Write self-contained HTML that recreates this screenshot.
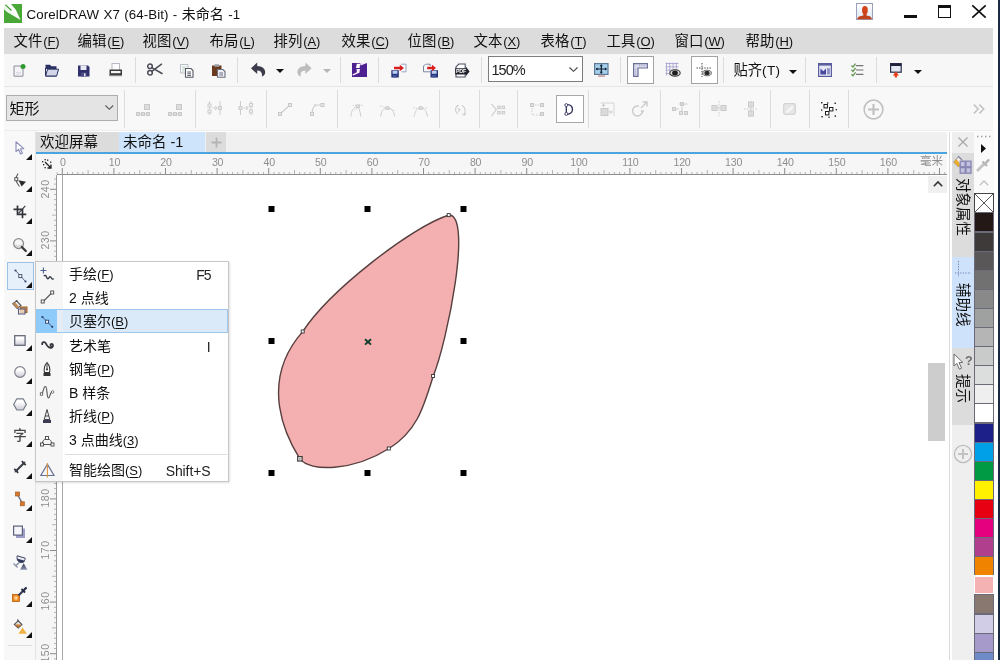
<!DOCTYPE html>
<html lang="zh">
<head>
<meta charset="utf-8">
<title>CorelDRAW X7 (64-Bit) - 未命名 -1</title>
<style>
*{box-sizing:border-box;margin:0;padding:0}
html,body{width:1000px;height:660px;overflow:hidden;background:#fff}
body{font-family:"Liberation Sans","Noto Sans CJK SC",sans-serif;color:#1a1a1a;position:relative;will-change:transform}
.abs,.abs>*{position:absolute}
svg{overflow:visible;display:block}
#title{left:0;top:0;width:1000px;height:28px;background:#fff}
#title .txt{left:26.5px;top:5px;font-size:13.3px;word-spacing:0.5px;letter-spacing:0.09px;line-height:18px;white-space:nowrap;color:#111}
#menubar{left:4px;top:28px;width:989px;height:26px;background:#dcdcdc}
#menubar span{margin-left:-0.5px;top:3px;font-size:14.4px;line-height:20px;white-space:nowrap;color:#111}
#menubar span i{font-style:normal;font-size:13px;letter-spacing:-0.1px;margin-left:.9px}
u{text-decoration:underline;text-underline-offset:2px;text-decoration-thickness:1px}
#tb1{left:4px;top:54px;width:989px;height:33px;background:#f7f7f7;border-bottom:1px solid #e6e6e6}
#tb2{left:4px;top:87px;width:989px;height:44px;background:#f8f8f8;border-bottom:1px solid #ededed}
.sep{width:1px;background:#dcdcdc}
.tri{width:0;height:0;border-left:4px solid transparent;border-right:4px solid transparent;border-top:4.5px solid #111}
.tri.g{border-top-color:#b5b5b5}
.box{background:#fff;border:1px solid #a3a3a3}
#prop svg{opacity:.86}
#prop svg.on{opacity:1}
#toolbox{left:4px;top:131px;width:32px;height:529px;background:#f8f8f8;border-right:1px solid #e4e4e4}
.ct{width:0;height:0;border-left:6.5px solid transparent;border-bottom:6.5px solid #111}
#tabs{left:36px;top:132px;width:911px;height:21px;background:#f0f0f0}
#tabs div{top:0;height:21px;font-size:14.5px;line-height:20px;white-space:nowrap;color:#111}
#hruler{left:36px;top:154px;width:911px;height:21px;background:#f6f6f6}
#vruler{left:36px;top:175px;width:21px;height:485px;background:#f6f6f6}
.rl{font-size:10.6px;line-height:11px;color:#8e8e8e;white-space:nowrap;letter-spacing:-0.2px}
#canvas{left:57px;top:175px;width:890px;height:485px;background:#fff}
#fly{left:35px;top:261px;width:194px;height:221px;background:#fff;border:1px solid #c6c6c6;box-shadow:1px 1px 2px rgba(0,0,0,.12)}
#fly .ic{left:0;top:0;width:27px;height:219px;background:#f6f6f6}
#fly .t{left:33px;font-size:14px;line-height:20px;white-space:nowrap;color:#111}
#fly .t i{font-style:normal;font-size:13px}
#fly .k{font-size:14px;line-height:20px;white-space:nowrap;color:#222;letter-spacing:-0.1px;margin-top:1.2px}
#dock{left:952px;top:132px;width:22px;height:528px;background:#efefef}
.vt{writing-mode:vertical-rl;text-orientation:sideways;font-size:14.5px;line-height:22px;width:22px;text-align:left;color:#111;white-space:nowrap;left:0}
#pal{left:974px;top:132px;width:20px;height:528px;background:#fafafa}
.sw{left:0;width:20px;height:20px;border:1px solid #6a6a78}
</style>
</head>
<body>
<!-- TITLE BAR -->
<div id="title" class="abs">
  <svg style="left:4px;top:4px" width="18" height="19" viewBox="0 0 18 19"><rect width="18" height="19" fill="#4aa838"/><path d="M0 0 H7 L12 6 L16.5 16 L9 11.5 L3 8 L0 5 Z" fill="#fff"/><path d="M0 5 L0 0 L3 0 L9 11.5 Z" fill="#eaf6e6"/><path d="M1.5 0.8 L7.5 6.5" stroke="#3f9a30" stroke-width="1.1" fill="none"/></svg>
  <div class="txt">CorelDRAW X7 (64-Bit) - <span style="position:static;font-size:14px">未命名</span> -1</div>
  <svg style="left:856px;top:3px" width="17" height="17" viewBox="0 0 17 17"><defs><linearGradient id="ug" x1="0" y1="0" x2="0" y2="1"><stop offset="0" stop-color="#ffffff"/><stop offset="1" stop-color="#dbe6f4"/></linearGradient></defs><rect x="0.5" y="0.5" width="16" height="16" fill="url(#ug)" stroke="#9aa0b8"/><ellipse cx="8.9" cy="7.3" rx="2.9" ry="4.2" fill="#d3441a"/><rect x="7.3" y="9.5" width="3.2" height="4" fill="#c9431b"/><path d="M1.2 16.2 C1.2 13.6 4.5 12.9 7 12.4 H10.8 C13.3 12.9 15.8 13.6 15.8 16.2 Z" fill="#c2421b"/></svg>
  <div style="left:904px;top:15px;width:13px;height:3px;background:#111"></div>
  <div style="left:938px;top:5px;width:13px;height:13px;border:1.3px solid #111;border-top-width:3px"></div>
  <svg style="left:971px;top:4px" width="16" height="15" viewBox="0 0 16 15"><path d="M1.3 1.3 L14.7 13.7 M14.7 1.3 L1.3 13.7" stroke="#111" stroke-width="1.7" fill="none"/></svg>
  <div style="left:998px;top:0;width:2px;height:660px;background:#1a2a42"></div>
</div>
<!-- MENU BAR -->
<div id="menubar" class="abs">
  <span style="left:10px">文件<i>(<u>F</u>)</i></span>
  <span style="left:74px">编辑<i>(<u>E</u>)</i></span>
  <span style="left:139px">视图<i>(<u>V</u>)</i></span>
  <span style="left:206px">布局<i>(<u>L</u>)</i></span>
  <span style="left:270px">排列<i>(<u>A</u>)</i></span>
  <span style="left:338px">效果<i>(<u>C</u>)</i></span>
  <span style="left:404px">位图<i>(<u>B</u>)</i></span>
  <span style="left:470px">文本<i>(<u>X</u>)</i></span>
  <span style="left:537px">表格<i>(<u>T</u>)</i></span>
  <span style="left:603px">工具<i>(<u>O</u>)</i></span>
  <span style="left:671px">窗口<i>(<u>W</u>)</i></span>
  <span style="left:742px">帮助<i>(<u>H</u>)</i></span>
</div>
<!-- TOOLBARS BACKGROUND -->
<div id="tb1" class="abs"></div>
<div id="tb2" class="abs"></div>
<!-- STANDARD TOOLBAR ICONS -->
<div class="abs" id="std" style="left:0;top:0">
  <div class="sep" style="left:135px;top:57px;height:26px"></div>
  <div class="sep" style="left:237px;top:57px;height:26px"></div>
  <div class="sep" style="left:340px;top:57px;height:26px"></div>
  <div class="sep" style="left:378px;top:57px;height:26px"></div>
  <div class="sep" style="left:481px;top:57px;height:26px"></div>
  <div class="sep" style="left:620px;top:57px;height:26px"></div>
  <div class="sep" style="left:723px;top:57px;height:26px"></div>
  <div class="sep" style="left:805px;top:57px;height:26px"></div>
  <div class="sep" style="left:876px;top:57px;height:26px"></div>
  <!-- new -->
  <svg style="left:13px;top:63px" width="13" height="14" viewBox="0 0 13 14"><path d="M1 3 H7.5 L10 5.5 V13.2 H1 Z" fill="#f3f3f7" stroke="#8d8d9c" stroke-width="1"/><path d="M3 9.5 H8 M3 11 H8" stroke="#d5d5df" stroke-width=".8"/><circle cx="10" cy="3.6" r="2.5" fill="#2f9b2f"/></svg>
  <!-- open -->
  <svg style="left:45px;top:64px" width="14" height="13" viewBox="0 0 14 13"><path d="M0.5 0.8 H5 L6.5 2.3 H11.5 V5 H0.5 Z" fill="#2b3163"/><path d="M0.5 4 V12 H11.5" fill="none" stroke="#2b3163" stroke-width="1"/><path d="M0.6 12 L2.6 5.2 H13.6 L11.6 12 Z" fill="#d3d6e6" stroke="#2b3163" stroke-width="1"/></svg>
  <!-- save -->
  <svg style="left:78px;top:65px" width="12" height="12" viewBox="0 0 12 12"><path d="M0 0.5 H10 L11.5 2 V11.5 H0 Z" fill="#2e2f6c"/><rect x="2.5" y="0.5" width="6" height="4.5" fill="#e9e9f4"/><rect x="3" y="7.5" width="5.5" height="4" fill="#4a4b86"/><rect x="6" y="8.3" width="1.5" height="3" fill="#e9e9f4"/></svg>
  <!-- print -->
  <svg style="left:109px;top:63px" width="14" height="14" viewBox="0 0 14 14"><rect x="3" y="0.5" width="7.5" height="7" fill="#fbfbfd" stroke="#b9b9c4" stroke-width="1"/><path d="M0.5 6.5 H13 V13 H0.5 Z" fill="#3a3a3a"/><rect x="2" y="8" width="9.5" height="2.2" fill="#f3f3f3"/><rect x="0.5" y="12" width="12.5" height="1.2" fill="#888"/></svg>
  <!-- cut -->
  <svg style="left:147px;top:63px" width="16" height="13" viewBox="0 0 16 13"><g fill="none" stroke="#4c4c58" stroke-width="1.5"><circle cx="3" cy="3.3" r="2.3"/><circle cx="3" cy="9.7" r="2.3"/><path d="M4.8 4.6 L15 10.5 M4.8 8.4 L14.5 1.2" stroke-linecap="round"/></g></svg>
  <!-- copy -->
  <svg style="left:180px;top:64px" width="14" height="14" viewBox="0 0 14 14"><path d="M0.5 0.5 H8 V9 H0.5 Z" fill="#fafafa" stroke="#b9c0c8" stroke-width="1"/><path d="M2 3 H6.5 M2 5 H6.5 M2 7 H4.5" stroke="#b0d0c0" stroke-width=".9"/><path d="M5.5 4.5 H11 L13 6.5 V13.3 H5.5 Z" fill="#fff" stroke="#555a66" stroke-width="1.1"/><path d="M7.3 8 H11 M7.3 9.8 H11 M7.3 11.6 H11" stroke="#555a66" stroke-width="1"/></svg>
  <!-- paste -->
  <svg style="left:212px;top:64px" width="14" height="14" viewBox="0 0 14 14"><rect x="0" y="1.5" width="9.5" height="10.5" fill="#6a3a1f"/><rect x="2.5" y="0.3" width="4.5" height="2.6" fill="#9b9ba3"/><path d="M5.5 5.5 H11 L13 7.5 V13.3 H5.5 Z" fill="#eef0f6" stroke="#6b6f80" stroke-width="1.1"/><path d="M7.3 9 H11 M7.3 11 H11" stroke="#6b6f80" stroke-width="1"/></svg>
  <!-- undo -->
  <svg style="left:251px;top:62px" width="15" height="15" viewBox="0 0 15 15"><path d="M0 6.2 L6.2 0.6 V4 C11 4 14.2 6.8 14.2 10.2 C14.2 12.4 12.8 14 10.8 14.6 C11.6 11.5 10.2 8.6 6.2 8.6 V12 Z" fill="#3c3c4c"/></svg>
  <div class="tri" style="left:275.5px;top:69px"></div>
  <!-- redo -->
  <svg style="left:297px;top:62px" width="15" height="15" viewBox="0 0 15 15"><path transform="translate(14.6,0) scale(-1,1)" d="M0 6.2 L6.2 0.6 V4 C11 4 14.2 6.8 14.2 10.2 C14.2 12.4 12.8 14 10.8 14.6 C11.6 11.5 10.2 8.6 6.2 8.6 V12 Z" fill="#bdbdbd"/></svg>
  <div class="tri g" style="left:322.5px;top:69px"></div>
  <!-- purple launcher -->
  <svg style="left:352px;top:63px" width="15" height="14" viewBox="0 0 15 14"><rect width="15" height="14" fill="#4e2190"/><path d="M8.2 0 H15 L8.6 2.6 Z" fill="#f3eafa"/><path d="M4.8 0.8 H8.2 L7.6 5 H4 Z" fill="#fff"/><path d="M4.6 6 H8 L7.4 9.8 L1.2 12.6 L0.3 11.4 L4.8 9.2 Z" fill="#f7effc"/></svg>
  <!-- import -->
  <svg style="left:391px;top:63px" width="16" height="15" viewBox="0 0 16 15"><path d="M10 1.2 H15 V8.8 H10.5" fill="#f7f9fc" stroke="#93a4c0" stroke-width="1"/><rect x="0.3" y="7.2" width="7.5" height="7.3" fill="#27367a"/><rect x="1.6" y="7.8" width="4.8" height="3" fill="#bcd0f4"/><rect x="2" y="12" width="3.6" height="2.5" fill="#44579c"/><path d="M3 3.8 H8.8 V1.8 L13 5 L8.8 8.2 V6.2 H3 Z" fill="#d8201e"/></svg>
  <!-- export -->
  <svg style="left:423px;top:63px" width="16" height="15" viewBox="0 0 16 15"><path d="M7 8.8 H0.5 V4 C0.5 2.4 2 1.2 3.5 1.2 H7.2 V3" fill="#f7f9fc" stroke="#7d879c" stroke-width="1"/><rect x="7.5" y="7.2" width="7.5" height="7.3" fill="#27367a"/><rect x="8.8" y="7.8" width="4.8" height="3" fill="#bcd0f4"/><rect x="9.2" y="12" width="3.6" height="2.5" fill="#44579c"/><path d="M4.2 3.8 H9 V1.8 L13 5 L9 8.2 V6.2 H4.2 Z" fill="#d8201e"/></svg>
  <!-- pdf -->
  <svg style="left:455px;top:63px" width="15" height="15" viewBox="0 0 15 15"><path d="M1 3.8 L3.8 1 H10.2 V14 H1 Z" fill="#fff" stroke="#4c4f60" stroke-width="1.1"/><path d="M0.2 5.2 H11 V3.8 L14.6 8.4 L11 13 V11.6 H0.2 Z" fill="#20222c"/><text x="0.9" y="10.3" font-family="Liberation Sans,sans-serif" font-size="5.4" font-weight="bold" fill="#fff" letter-spacing="-.2">PDF</text></svg>
  <!-- zoom combobox -->
  <div class="box" style="left:488px;top:56px;width:95px;height:26px;border-color:#7d7d7d"></div>
  <div style="left:491.5px;top:60px;font-size:14.5px;line-height:20px;letter-spacing:-1px;color:#222">150%</div>
  <svg style="left:569px;top:67px" width="9" height="5" viewBox="0 0 9 5"><path d="M0.5 0.5 L4.5 4.3 L8.5 0.5" fill="none" stroke="#444" stroke-width="1.1"/></svg>
  <!-- fit -->
  <svg style="left:594px;top:63px" width="15" height="15" viewBox="0 0 15 15"><rect x="0.6" y="0.6" width="13.4" height="10.8" fill="#a5cfec" stroke="#5f7896" stroke-width="1.2"/><path d="M7.3 1.8 V10.2 M2.2 6 H12.4" stroke="#0e1c2c" stroke-width="1.2"/><path d="M7.3 1.2 L5.7 3.2 H8.9 Z M7.3 10.8 L5.7 8.8 H8.9 Z M1.6 6 L3.6 4.4 V7.6 Z M13 6 L11 4.4 V7.6 Z" fill="#0e1c2c"/><rect x="4" y="12.4" width="7" height="1.3" fill="#c08a96"/></svg>
  <!-- rulers toggle -->
  <div class="box" style="left:627px;top:56px;width:27px;height:28px"></div>
  <svg style="left:633px;top:63px" width="15" height="14" viewBox="0 0 15 14"><path d="M0.6 0.6 H14.4 V5 H5 V13.4 H0.6 Z" fill="#dcdcee" stroke="#6c7098" stroke-width="1.2"/><path d="M6 2.6 H13 M2.7 6 V12" stroke="#9b9fc4" stroke-width="1" stroke-dasharray="1.2 1.2"/></svg>
  <!-- grid -->
  <svg style="left:665px;top:62px" width="16" height="15" viewBox="0 0 16 15"><g stroke="#a9a5d0" stroke-width=".9"><path d="M0.5 1.5 H13.5 M0.5 4.8 H13.5 M0.5 8.1 H13.5 M0.5 11.4 H13.5"/><path d="M1.5 0.5 V13.5 M4.8 0.5 V13.5 M8.1 0.5 V13.5 M11.4 0.5 V13.5"/></g><ellipse cx="10" cy="11" rx="5.6" ry="3.7" fill="#f4f4f4"/><ellipse cx="10" cy="11" rx="5.2" ry="3.3" fill="#d8d8d8" stroke="#3a3a3a" stroke-width="1.1"/><ellipse cx="10" cy="11" rx="2.9" ry="2.5" fill="#1e1e1e"/></svg>
  <!-- guidelines -->
  <div class="box" style="left:691px;top:56px;width:27px;height:28px"></div>
  <svg style="left:696px;top:63px" width="16" height="15" viewBox="0 0 16 15"><path d="M0.5 5 H15.5" stroke="#444" stroke-width="1" stroke-dasharray="1.4 1.2"/><path d="M6 0 V14" stroke="#444" stroke-width="1" stroke-dasharray="1.4 1.2"/><ellipse cx="11" cy="10" rx="4.4" ry="2.8" fill="#cfcfcf" stroke="#666" stroke-width=".9"/><ellipse cx="11" cy="10" rx="2.6" ry="2.2" fill="#2a2a2a"/></svg>
  <!-- snap -->
  <div style="left:733.5px;top:60px;font-size:14.3px;line-height:20px;white-space:nowrap;color:#111">贴齐<span style="position:static;font-size:13.5px;letter-spacing:.3px">(T)</span></div>
  <div class="tri" style="left:788.5px;top:69.5px"></div>
  <!-- options window -->
  <svg style="left:818px;top:63px" width="14" height="14" viewBox="0 0 14 14"><rect x="0.6" y="0.6" width="12.8" height="12.8" fill="#e6e9f5" stroke="#5a5d9e" stroke-width="1.2"/><rect x="0.6" y="0.6" width="12.8" height="2" fill="#5a5d9e"/><path d="M2.4 11.4 V5.6 L5.4 8.2 L8 5.6 V11.4 Z" fill="#4648a0"/><rect x="9" y="5.2" width="3" height="6.2" fill="#8f93c8"/></svg>
  <!-- checklist -->
  <svg style="left:851px;top:63px" width="13" height="14" viewBox="0 0 13 14"><g stroke="#737373" stroke-width="1.2"><path d="M5 2.6 H12.4 M5 7 H12.4 M5 11.4 H12.4"/></g><g fill="none" stroke="#6c9a5a" stroke-width="1.4"><path d="M0.4 2.4 L2 4 L4.6 0.6"/><path d="M0.4 6.8 L2 8.4 L4.6 5"/><path d="M0.4 11.2 L2 12.8 L4.6 9.4"/></g></svg>
  <!-- launcher -->
  <svg style="left:890px;top:63px" width="12" height="15" viewBox="0 0 12 15"><rect x="0.6" y="0.6" width="10.6" height="8.6" fill="#e3e6f3" stroke="#2a2d4a" stroke-width="1.2"/><rect x="0.6" y="0.6" width="10.6" height="2.4" fill="#1f2238"/><path d="M5.9 8.4 L2.8 12.4 H4.8 V14.4 H7 V12.4 H9 Z" fill="#e63a14"/></svg>
  <div class="tri" style="left:914px;top:69.5px"></div>
</div>
<!-- PROPERTY BAR -->
<div class="abs" id="prop" style="left:0;top:0">
  <div class="sep" style="left:124px;top:90px;height:38px"></div>
  <div class="sep" style="left:195px;top:90px;height:38px"></div>
  <div class="sep" style="left:266px;top:90px;height:38px"></div>
  <div class="sep" style="left:337px;top:90px;height:38px"></div>
  <div class="sep" style="left:439px;top:90px;height:38px"></div>
  <div class="sep" style="left:479px;top:90px;height:38px"></div>
  <div class="sep" style="left:517px;top:90px;height:38px"></div>
  <div class="sep" style="left:588px;top:90px;height:38px"></div>
  <div class="sep" style="left:660px;top:90px;height:38px"></div>
  <div class="sep" style="left:699px;top:90px;height:38px"></div>
  <div class="sep" style="left:770px;top:90px;height:38px"></div>
  <div class="sep" style="left:809px;top:90px;height:38px"></div>
  <div class="sep" style="left:848px;top:90px;height:38px"></div>
  <div style="left:6px;top:95px;width:112px;height:26px;background:#e4e4e4;border:1px solid #adadad"></div>
  <div style="left:9.5px;top:98.5px;font-size:15px;line-height:20px;white-space:nowrap;color:#111">矩形</div>
  <svg class="on" style="left:105px;top:105px" width="9" height="5" viewBox="0 0 9 5"><path d="M0.5 0.5 L4.3 4.3 L8.1 0.5" fill="none" stroke="#555" stroke-width="1.1"/></svg>
  <!-- 1,2 node add/remove -->
  <svg style="left:136px;top:104px" width="15" height="13" viewBox="0 0 15 13"><g fill="#d9d9d9" stroke="#c2c2c2" stroke-width="1"><rect x="8.5" y="0.5" width="5" height="5"/><rect x="0.5" y="8.5" width="3" height="3"/><rect x="5.5" y="8.5" width="3" height="3"/><rect x="10.5" y="8.5" width="3" height="3"/></g><path d="M3.5 10 H5.5 M8.5 10 H10.5" stroke="#c2c2c2"/></svg>
  <svg style="left:168px;top:104px" width="15" height="13" viewBox="0 0 15 13"><g fill="#d9d9d9" stroke="#c2c2c2" stroke-width="1"><rect x="8.5" y="0.5" width="5" height="5"/><rect x="0.5" y="8.5" width="3" height="3"/><rect x="5.5" y="8.5" width="3" height="3"/><rect x="10.5" y="8.5" width="3" height="3"/></g><path d="M3.5 10 H5.5 M8.5 10 H10.5" stroke="#c2c2c2"/></svg>
  <!-- 3,4 join/break -->
  <svg style="left:207px;top:101px" width="16" height="15" viewBox="0 0 16 15"><g fill="none" stroke="#c6c6c6" stroke-width="1"><path d="M2.5 0 V14 M13 0 V14"/><rect x="1" y="3" width="3" height="3" fill="#f2f2f2"/><rect x="1" y="9" width="3" height="3" fill="#f2f2f2"/><rect x="11.5" y="5.5" width="3" height="3" fill="#e2e2e2"/><path d="M5.5 7 H10 M8 5 L10.4 7 L8 9"/></g></svg>
  <svg style="left:238px;top:101px" width="16" height="15" viewBox="0 0 16 15"><g fill="none" stroke="#c6c6c6" stroke-width="1"><path d="M2.5 0 V14 M13 0 V14"/><rect x="1" y="5.5" width="3" height="3" fill="#e2e2e2"/><rect x="11.5" y="2.5" width="3" height="3" fill="#f2f2f2"/><rect x="11.5" y="9" width="3" height="3" fill="#f2f2f2"/><path d="M5.5 7 H10 M8 5 L10.4 7 L8 9"/></g></svg>
  <!-- 5,6 to line / to curve -->
  <svg style="left:278px;top:103px" width="14" height="13" viewBox="0 0 14 13"><path d="M2 11 L12 2" stroke="#c6c6c6" stroke-width="1.2"/><rect x="0.5" y="9.5" width="3" height="3" fill="#e4e4e4" stroke="#c2c2c2"/><rect x="10.5" y="0.5" width="3" height="3" fill="#e4e4e4" stroke="#c2c2c2"/></svg>
  <svg style="left:310px;top:103px" width="15" height="13" viewBox="0 0 15 13"><path d="M2 11 C2 5 4 2 8 2 H13" fill="none" stroke="#c6c6c6" stroke-width="1.2"/><rect x="0.5" y="9.5" width="3" height="3" fill="#e4e4e4" stroke="#c2c2c2"/><rect x="11" y="0.5" width="3" height="3" fill="#e4e4e4" stroke="#c2c2c2"/><rect x="4" y="1" width="2.4" height="2.4" fill="#d6d6d6"/></svg>
  <!-- 7,8,9 cusp/smooth/symmetrical -->
  <svg style="left:349.8px;top:104px" width="13.5" height="13.5" viewBox="0 0 15 15"><g fill="none" stroke="#c6c6c6" stroke-width="1.1"><path d="M1 14 C1 8 4 3 9 2.5 M9 2.5 C10 6 12 10 12 14"/><path d="M3 1.5 H14 M9 2.5 L5 8" stroke-dasharray="1.4 1"/></g><rect x="7.5" y="1" width="3" height="3" fill="#dcdcdc" stroke="#c2c2c2"/></svg>
  <svg style="left:379px;top:104px" width="17" height="13.5" viewBox="0 0 19 15"><g fill="none" stroke="#c6c6c6" stroke-width="1.1"><path d="M2 14 C2 8 5 4.5 9.5 4.5 C14 4.5 17 8 17.5 14"/><path d="M1 2 L17 7" stroke-dasharray="1.6 1"/></g><rect x="8" y="3" width="3" height="3" fill="#dcdcdc" stroke="#c2c2c2"/></svg>
  <svg style="left:412.8px;top:104px" width="15.5" height="13.5" viewBox="0 0 17 15"><g fill="none" stroke="#c6c6c6" stroke-width="1.1"><path d="M1 14 C2 8 4.5 4.5 8.5 4.5 C12.5 4.5 15 8 16 14"/><path d="M0.5 4.5 H16.5" stroke-dasharray="1.6 1"/></g><rect x="7" y="3" width="3" height="3" fill="#dcdcdc" stroke="#c2c2c2"/></svg>
  <!-- 10 reverse -->
  <svg style="left:452.5px;top:103.5px" width="14.5" height="13" viewBox="0 0 16 15"><g fill="none" stroke="#c6c6c6" stroke-width="1.2"><path d="M6.5 1.5 C2 2.5 1 8 5 11.5"/><path d="M10 1.5 C14 4 14.5 9 12.5 12"/><path d="M10.5 11.2 L12.6 13 L14.6 10.8"/><path d="M5 5 L7.8 6.6 L5.6 8.8"/></g></svg>
  <!-- 11 extract -->
  <svg style="left:491px;top:103px" width="15" height="14" viewBox="0 0 17 16"><g fill="none" stroke="#c6c6c6" stroke-width="1.2"><path d="M0.5 1 L6 7.5 L0.5 15"/></g><g fill="#e2e2e2" stroke="#c2c2c2"><rect x="7.5" y="3.5" width="3" height="3"/><rect x="12.5" y="3.5" width="3" height="3"/><rect x="7.5" y="9.5" width="3" height="3"/><rect x="12.5" y="9.5" width="3" height="3"/></g></svg>
  <!-- 12 -->
  <svg style="left:530px;top:103px" width="15" height="14" viewBox="0 0 15 14"><path d="M2 2 H12 M2 2 V12 H12" fill="none" stroke="#c6c6c6" stroke-width="1" stroke-dasharray="1.6 1.2"/><g fill="#dadada" stroke="#c2c2c2"><rect x="0.5" y="0.5" width="3" height="3"/><rect x="10.5" y="0.5" width="3" height="3"/><rect x="10.5" y="9.5" width="3" height="3"/></g></svg>
  <!-- 13 close curve (active) -->
  <div class="box" style="left:556px;top:95px;width:28px;height:28px;border-color:#a8a8a8"></div>
  <svg class="on" style="left:564px;top:102.5px" width="9.7" height="13.2" viewBox="0 0 11 15"><path d="M2.6 2 C8 1.2 9.8 4.6 9.6 7.6 C9.4 10.8 7 13 2.6 12.6 M2.6 4 V10.8" fill="none" stroke="#30305c" stroke-width="1.5"/><g fill="#fff" stroke="#30305c" stroke-width="1"><circle cx="2.6" cy="2.4" r="1.7"/><circle cx="2.6" cy="12.4" r="1.7"/></g></svg>
  <!-- 14 stretch -->
  <svg style="left:600px;top:102px" width="15" height="15" viewBox="0 0 15 15"><path d="M0.5 1 H14 V14" fill="none" stroke="#d0d0d0" stroke-width="1"/><rect x="1" y="6.5" width="7" height="7" fill="#d6d6d6" stroke="#c2c2c2"/><path d="M3.5 1.5 V5 M1.8 3.2 H5.2 M9.5 10 H13 M11 8.4 L9.4 10 L11 11.6" fill="none" stroke="#c2c2c2" stroke-width="1"/></svg>
  <!-- 15 rotate -->
  <svg style="left:632px;top:101px" width="16" height="16" viewBox="0 0 16 16"><g fill="none" stroke="#c4c4c4" stroke-width="1.4"><path d="M10.5 9.8 A5 5 0 1 1 7 5.2"/><path d="M9 7 L15 1 M10.6 1 H15 V5.4"/></g><path d="M8.4 9.6 L12.6 9.6 L10.5 12.2 Z" fill="#c4c4c4"/></svg>
  <!-- 16 align nodes -->
  <svg style="left:672px;top:102px" width="16" height="14" viewBox="0 0 16 14"><g fill="#dedede" stroke="#c2c2c2"><rect x="8.5" y="0.5" width="3" height="3"/><rect x="0.5" y="5.5" width="3" height="3"/><rect x="12.5" y="9.5" width="3" height="3"/><rect x="7.5" y="9.5" width="3" height="3"/></g><path d="M4 7 H7 M7 2 H15.5 M10 4.5 V9" stroke="#c6c6c6" fill="none"/></svg>
  <!-- 17,18 reflect -->
  <svg style="left:711px;top:101px" width="16" height="15" viewBox="0 0 16 15"><path d="M8 0 V15" stroke="#c6c6c6" stroke-dasharray="1.6 1.2"/><g fill="#dedede" stroke="#c2c2c2"><rect x="1" y="4.5" width="5" height="5"/><rect x="10" y="4.5" width="5" height="5"/></g><path d="M0 7 H16" stroke="#c9c9c9" stroke-width=".9"/></svg>
  <svg style="left:744px;top:101px" width="14" height="16" viewBox="0 0 14 16"><path d="M0 8 H14" stroke="#c6c6c6" stroke-dasharray="1.6 1.2"/><g fill="#dedede" stroke="#c2c2c2"><rect x="4.5" y="1" width="5" height="5"/><rect x="4.5" y="10" width="5" height="5"/></g><path d="M7 0 V16" stroke="#c9c9c9" stroke-width=".9"/></svg>
  <!-- 19 elastic -->
  <svg style="left:783px;top:103px" width="13" height="12" viewBox="0 0 13 12"><rect x="0.7" y="0.7" width="11.6" height="10.6" rx="1.5" fill="#e4e4e4" stroke="#cdcdcd" stroke-width="1.2"/><path d="M2.5 9 L9.5 2.5 L10.5 4.5 L4.5 10 Z" fill="#f8f8f8"/></svg>
  <!-- 20 select all nodes -->
  <svg class="on" style="left:821px;top:102px" width="16" height="16" viewBox="0 0 16 16"><g fill="#1c1c1c"><rect x="0" y="0" width="1.4" height="1.4"/><rect x="6" y="0.4" width="1.3" height="1.3"/><rect x="13.5" y="0.6" width="1.4" height="1.4"/><rect x="14.6" y="7" width="1.3" height="1.3"/><rect x="0" y="7.4" width="1.3" height="1.3"/><rect x="0.4" y="14" width="1.4" height="1.4"/><rect x="13.6" y="13.4" width="1.4" height="1.4"/><rect x="7.4" y="14.6" width="1.3" height="1.3"/></g><g fill="#fff" stroke="#1c1c1c" stroke-width="1"><rect x="3" y="2.5" width="3.4" height="3.4"/><rect x="8.5" y="5.5" width="3.4" height="3.4"/><rect x="4.5" y="9.5" width="3.4" height="3.4"/></g></svg>
  <!-- quick customise -->
  <svg style="left:863px;top:99px" width="21" height="21" viewBox="0 0 21 21"><circle cx="10.5" cy="10.5" r="9.4" fill="none" stroke="#b6b6b6" stroke-width="1.5"/><path d="M10.5 5 V16 M5 10.5 H16" stroke="#b9b9b9" stroke-width="2.2"/></svg>
  <svg style="left:973px;top:104px" width="12" height="10" viewBox="0 0 12 10"><path d="M0.8 0.6 L5.2 5 L0.8 9.4 M6.4 0.6 L10.8 5 L6.4 9.4" fill="none" stroke="#b9b9b9" stroke-width="1.5"/></svg>
</div>
<!-- TOOLBOX -->
<div id="toolbox" class="abs"></div>
<div class="abs" id="tools" style="left:0;top:0">
  <!-- pick -->
  <svg style="left:15px;top:141px" width="10" height="14" viewBox="0 0 10 14"><path d="M1 0.8 L1 10.6 L3.6 8.4 L5.6 13 L7.4 12.2 L5.4 7.8 L8.8 7.6 Z" fill="#fff" stroke="#9092bd" stroke-width="1.2" stroke-linejoin="round"/></svg>
  <div class="ct" style="left:25.5px;top:154px"></div>
  <!-- shape -->
  <svg style="left:13px;top:173px" width="14" height="15" viewBox="0 0 14 15"><path d="M5 0.5 C2.5 4 2.5 9 6.5 13.5" fill="none" stroke="#555" stroke-width="1.1"/><rect x="1.8" y="4.8" width="3" height="3" fill="#fff" stroke="#444" stroke-width=".9"/><path d="M5.5 7.2 L13 8.8 L8.6 13.6 Z" fill="#2a2a2a"/></svg>
  <div class="ct" style="left:25.5px;top:186px"></div>
  <!-- crop -->
  <svg style="left:13px;top:205px" width="14" height="14" viewBox="0 0 14 14"><path d="M4.5 0.5 V9.3 H13.3 M0.5 4.3 H9.5 V13.3" fill="none" stroke="#34343c" stroke-width="1.7"/><path d="M5.5 8.3 L12.3 0.8" stroke="#34343c" stroke-width="1.1"/></svg>
  <div class="ct" style="left:25.5px;top:218px"></div>
  <!-- zoom -->
  <svg style="left:12.5px;top:238px" width="14" height="14" viewBox="0 0 14 14"><circle cx="5.6" cy="5.6" r="4.9" fill="#f6f6f6" stroke="#8a8a8a" stroke-width="1.3"/><path d="M2.5 6.8 C3.5 8.6 7 9 8.8 6.8" fill="none" stroke="#d0d0d0" stroke-width="1.4"/><path d="M8.8 9 L12.8 13" stroke="#3a3a3a" stroke-width="2.3" stroke-linecap="round"/></svg>
  <div class="ct" style="left:25.5px;top:250px"></div>
  <!-- bezier (active) -->
  <div style="left:7px;top:262px;width:27px;height:28px;background:#e5f0fb;border:1px solid #9dc1e4"></div>
  <svg style="left:14px;top:269px" width="13" height="14" viewBox="0 0 13 14"><path d="M1.5 1.5 L11.5 12.5" stroke="#5a6a8a" stroke-width="1"/><rect x="4.8" y="5.6" width="3" height="3" fill="#fff" stroke="#3c4a66" stroke-width=".9"/><circle cx="1.5" cy="1.5" r="1.1" fill="#3c4a66"/><circle cx="11.5" cy="12.5" r="1.1" fill="#3c4a66"/></svg>
  <div class="ct" style="left:25.5px;top:282px"></div>
  <!-- smart fill -->
  <svg style="left:12px;top:300px" width="16" height="15" viewBox="0 0 16 15"><path d="M0.8 3.8 L4.6 0.8 L9 5.5 L5.2 8.6 Z" fill="#f1ece6" stroke="#5a5660" stroke-width="1.1"/><path d="M3 2.2 L7.2 7 L5.2 8.6 L0.8 3.8 Z" fill="#c08a55"/><path d="M4.4 0.2 L5 1.6" stroke="#444" stroke-width="1.3"/><rect x="8.5" y="7" width="6.5" height="5.5" fill="#cf8a4a" stroke="#96602c" stroke-width="1"/><rect x="6.5" y="9" width="6.5" height="5" fill="#f6e6d6" fill-opacity=".75" stroke="#5c5c84" stroke-width="1.1"/></svg>
  <!-- rectangle -->
  <svg style="left:14.3px;top:335px" width="12" height="11" viewBox="0 0 12 11"><defs><linearGradient id="rg" x1="0" y1="0" x2="0" y2="1"><stop offset="0.3" stop-color="#fff"/><stop offset="1" stop-color="#c9c9d6"/></linearGradient></defs><rect x="0.7" y="0.7" width="10.4" height="9.6" fill="url(#rg)" stroke="#666a78" stroke-width="1.3"/></svg>
  <div class="ct" style="left:25.5px;top:345px"></div>
  <!-- ellipse -->
  <svg style="left:13.1px;top:365.4px" width="14" height="14" viewBox="0 0 14 14"><circle cx="7" cy="7" r="5.3" fill="url(#rg)" stroke="#80838e" stroke-width="1.2"/></svg>
  <div class="ct" style="left:25.5px;top:378px"></div>
  <!-- polygon -->
  <svg style="left:13px;top:398px" width="14" height="13" viewBox="0 0 14 13"><path d="M3.8 0.8 H10.2 L13.3 6.4 L10.2 12 H3.8 L0.7 6.4 Z" fill="url(#rg)" stroke="#7a7e8a" stroke-width="1.2"/></svg>
  <div class="ct" style="left:25.5px;top:410px"></div>
  <!-- text -->
  <div style="left:13.3px;top:426px;font-size:13.5px;line-height:20px;font-weight:500;color:#484848">字</div>
  <div class="ct" style="left:25.5px;top:441px"></div>
  <!-- dimension -->
  <svg style="left:13px;top:460px" width="14" height="14" viewBox="0 0 14 14"><path d="M3 11 L11 3" stroke="#363b45" stroke-width="2"/><path d="M1.2 8.8 L5.2 12.8 M8.8 1.2 L12.8 5.2" stroke="#363b45" stroke-width="1.7"/><path d="M1.6 12.4 L2.2 8.8 L5.2 11.8 Z M12.4 1.6 L11.8 5.2 L8.8 2.2 Z" fill="#363b45"/></svg>
  <div class="ct" style="left:25.5px;top:473px"></div>
  <!-- connector -->
  <svg style="left:14px;top:491px" width="12" height="16" viewBox="0 0 12 16"><path d="M3.5 3.5 L8.5 12.5" stroke="#63708e" stroke-width="1.4"/><rect x="1.6" y="1" width="4" height="4" fill="#d57a2e" stroke="#a55a1c" stroke-width=".7"/><rect x="6.3" y="10.8" width="4" height="4" fill="#d57a2e" stroke="#a55a1c" stroke-width=".7"/></svg>
  <div class="ct" style="left:25.5px;top:505px"></div>
  <!-- drop shadow -->
  <svg style="left:13px;top:525px" width="13" height="13" viewBox="0 0 13 13"><rect x="3" y="3.5" width="9" height="9.5" fill="#9c9dc8"/><rect x="0.6" y="1.1" width="8.8" height="9" fill="#f6f6fa" stroke="#5e617c" stroke-width="1.2"/></svg>
  <div class="ct" style="left:25.5px;top:537px"></div>
  <!-- transparency -->
  <svg style="left:13px;top:555px" width="15" height="15" viewBox="0 0 15 15"><defs><linearGradient id="tg" x1="0" y1="0" x2="0" y2="1"><stop offset="0" stop-color="#2f3652"/><stop offset="1" stop-color="#9097b2"/></linearGradient></defs><path d="M4.2 0.8 L12.2 3.2 C12 6.6 9 8.4 6.6 7.2 C4.4 6 3.6 3.4 4.2 0.8 Z" fill="#eef0f6" stroke="#3a4262" stroke-width="1"/><path d="M3.9 3.6 L12 5.8 C11 8 8.5 8.4 6.6 7.2 C5 6.4 4.1 5 3.9 3.6 Z" fill="#333a5a"/><path d="M6.4 7.4 L2.8 10.6" stroke="#7e87a0" stroke-width="1.3"/><path d="M0.5 8.6 L4.6 12.4" stroke="#8a92aa" stroke-width="1.4"/><path d="M10.7 8.2 L14.4 14.8 H7 Z" fill="url(#tg)"/></svg>
  <!-- eyedropper -->
  <svg style="left:12px;top:586px" width="16" height="16" viewBox="0 0 16 16"><rect x="0.5" y="8.5" width="7" height="7" fill="#f08a1c" stroke="#b55e0a" stroke-width=".8"/><rect x="2.5" y="10.5" width="3" height="3" fill="#ffd9a8"/><path d="M6.5 9.5 L11 5" stroke="#333a55" stroke-width="2.2"/><path d="M9.5 3 L13 6.5" stroke="#222840" stroke-width="1.8"/><path d="M11 3.5 L13.2 1.2 C14.2 0.4 15.6 1.8 14.8 2.8 L12.5 5 Z" fill="#222840"/></svg>
  <div class="ct" style="left:25.5px;top:601px"></div>
  <!-- interactive fill -->
  <svg style="left:13px;top:619px" width="15" height="16" viewBox="0 0 15 16"><path d="M4.6 0.4 L5.4 2.6" stroke="#4a4e58" stroke-width="1.3"/><path d="M1.4 5.4 L5.2 1.8 L9 5.6 L5.2 9 Z" fill="#ece4d8" stroke="#50545e" stroke-width="1.1"/><path d="M1.8 5.6 H8.6 L5.2 8.7 Z" fill="#c9772e"/><path d="M9.6 8.6 L13.8 14.8 H5.4 Z" fill="#f1b040"/></svg>
  <div class="ct" style="left:25.5px;top:632px"></div>
  <div style="left:8px;top:645px;width:24px;height:1px;background:#dedede"></div>
</div>
<!-- DOCUMENT TABS -->
<div id="tabs" class="abs">
  <div style="left:0;width:83px;background:#dcdcdc;padding-left:4px">欢迎屏幕</div>
  <div style="left:83px;width:86px;background:#cde4fb;padding-left:4px">未命名 -1</div>
  <div style="left:170px;width:20px;background:#dcdcdc"></div>
  <svg style="left:175px;top:5px" width="11" height="11" viewBox="0 0 11 11"><path d="M5.5 0.5 V10.5 M0.5 5.5 H10.5" stroke="#b4b4b4" stroke-width="1.8"/></svg>
</div>
<div class="abs" style="left:36px;top:152px;width:911px;height:1.6px;background:#4aa4e0"></div>
<!-- HORIZONTAL RULER -->
<div id="hruler" class="abs">
  <svg style="left:0;top:0" width="911" height="21" viewBox="0 0 911 21"><path d="M21.1 18V20M31.5 18V20M36.6 18V20M41.8 18V20M46.9 18V20M52.1 16V20M57.3 18V20M62.4 18V20M67.6 18V20M72.7 18V20M83.1 18V20M88.2 18V20M93.4 18V20M98.5 18V20M103.7 16V20M108.9 18V20M114 18V20M119.2 18V20M124.3 18V20M134.7 18V20M139.8 18V20M145 18V20M150.1 18V20M155.3 16V20M160.5 18V20M165.6 18V20M170.8 18V20M175.9 18V20M186.3 18V20M191.4 18V20M196.6 18V20M201.7 18V20M206.9 16V20M212.1 18V20M217.2 18V20M222.4 18V20M227.5 18V20M237.9 18V20M243 18V20M248.2 18V20M253.3 18V20M258.5 16V20M263.7 18V20M268.8 18V20M274 18V20M279.1 18V20M289.5 18V20M294.6 18V20M299.8 18V20M304.9 18V20M310.1 16V20M315.3 18V20M320.4 18V20M325.6 18V20M330.7 18V20M341.1 18V20M346.2 18V20M351.4 18V20M356.5 18V20M361.7 16V20M366.9 18V20M372 18V20M377.2 18V20M382.3 18V20M392.7 18V20M397.8 18V20M403 18V20M408.1 18V20M413.3 16V20M418.5 18V20M423.6 18V20M428.8 18V20M433.9 18V20M444.3 18V20M449.4 18V20M454.6 18V20M459.7 18V20M464.9 16V20M470.1 18V20M475.2 18V20M480.4 18V20M485.5 18V20M495.9 18V20M501 18V20M506.2 18V20M511.3 18V20M516.5 16V20M521.7 18V20M526.8 18V20M532 18V20M537.1 18V20M547.5 18V20M552.6 18V20M557.8 18V20M562.9 18V20M568.1 16V20M573.3 18V20M578.4 18V20M583.6 18V20M588.7 18V20M599.1 18V20M604.2 18V20M609.4 18V20M614.5 18V20M619.7 16V20M624.9 18V20M630 18V20M635.2 18V20M640.3 18V20M650.7 18V20M655.8 18V20M661 18V20M666.1 18V20M671.3 16V20M676.5 18V20M681.6 18V20M686.8 18V20M691.9 18V20M702.3 18V20M707.4 18V20M712.6 18V20M717.7 18V20M722.9 16V20M728.1 18V20M733.2 18V20M738.4 18V20M743.5 18V20M753.9 18V20M759 18V20M764.2 18V20M769.3 18V20M774.5 16V20M779.7 18V20M784.8 18V20M790 18V20M795.1 18V20M805.5 18V20M810.6 18V20M815.8 18V20M820.9 18V20M826.1 16V20M831.3 18V20M836.4 18V20M841.6 18V20M846.7 18V20M857.1 18V20M862.2 18V20M867.4 18V20M872.5 18V20M877.7 16V20M882.9 18V20M888 18V20M893.2 18V20M898.3 18V20M908.7 18V20" stroke="#b4b4b4" stroke-width="1" fill="none"/><path d="M26.3 14V20M77.9 14V20M129.5 14V20M181.1 14V20M232.7 14V20M284.3 14V20M335.9 14V20M387.5 14V20M439.1 14V20M490.7 14V20M542.3 14V20M593.9 14V20M645.5 14V20M697.1 14V20M748.7 14V20M800.3 14V20M851.9 14V20M903.5 14V20" stroke="#8c8c8c" stroke-width="1" fill="none"/><path d="M21 20.5H911" stroke="#8e8e8e" stroke-width="1"/></svg>
  <div class="rl" style="left:26.8px;top:2.5px;transform:translateX(-50%)">0</div>
  <div class="rl" style="left:78.4px;top:2.5px;transform:translateX(-50%)">10</div>
  <div class="rl" style="left:130px;top:2.5px;transform:translateX(-50%)">20</div>
  <div class="rl" style="left:181.6px;top:2.5px;transform:translateX(-50%)">30</div>
  <div class="rl" style="left:233.2px;top:2.5px;transform:translateX(-50%)">40</div>
  <div class="rl" style="left:284.8px;top:2.5px;transform:translateX(-50%)">50</div>
  <div class="rl" style="left:336.4px;top:2.5px;transform:translateX(-50%)">60</div>
  <div class="rl" style="left:388px;top:2.5px;transform:translateX(-50%)">70</div>
  <div class="rl" style="left:439.6px;top:2.5px;transform:translateX(-50%)">80</div>
  <div class="rl" style="left:491.2px;top:2.5px;transform:translateX(-50%)">90</div>
  <div class="rl" style="left:542.8px;top:2.5px;transform:translateX(-50%)">100</div>
  <div class="rl" style="left:594.4px;top:2.5px;transform:translateX(-50%)">110</div>
  <div class="rl" style="left:646px;top:2.5px;transform:translateX(-50%)">120</div>
  <div class="rl" style="left:697.6px;top:2.5px;transform:translateX(-50%)">130</div>
  <div class="rl" style="left:749.2px;top:2.5px;transform:translateX(-50%)">140</div>
  <div class="rl" style="left:800.8px;top:2.5px;transform:translateX(-50%)">150</div>
  <div class="rl" style="left:852.4px;top:2.5px;transform:translateX(-50%)">160</div>
  <div class="rl" style="left:884px;top:1px;font-size:11.5px;line-height:13px;letter-spacing:0">毫米</div>
  <svg style="left:6px;top:5px" width="11" height="11" viewBox="0 0 11 11"><g fill="#222"><rect x="0" y="2" width="1.3" height="1.3"/><rect x="2.5" y="0" width="1.3" height="1.3"/><rect x="5" y="0.5" width="1.3" height="1.3"/><rect x="1" y="5" width="1.3" height="1.3"/><rect x="8" y="2.5" width="1.3" height="1.3"/><rect x="2.5" y="8" width="1.3" height="1.3"/></g><path d="M3 3 L9 9 M9 5.5 V9 H5.5" stroke="#222" stroke-width="1.3" fill="none"/></svg>
</div>
<!-- VERTICAL RULER -->
<div id="vruler" class="abs">
  <svg style="left:0;top:0" width="21" height="485" viewBox="0 0 21 485"><path d="M18 4H20M18 9.1H20M18 19.5H20M18 24.6H20M18 29.8H20M18 34.9H20M16 40.1H20M18 45.3H20M18 50.4H20M18 55.6H20M18 60.7H20M18 71.1H20M18 76.2H20M18 81.4H20M18 86.5H20M16 91.7H20M18 96.9H20M18 102H20M18 107.2H20M18 112.3H20M18 122.7H20M18 127.8H20M18 133H20M18 138.1H20M16 143.3H20M18 148.5H20M18 153.6H20M18 158.8H20M18 163.9H20M18 174.3H20M18 179.4H20M18 184.6H20M18 189.7H20M16 194.9H20M18 200.1H20M18 205.2H20M18 210.4H20M18 215.5H20M18 225.9H20M18 231H20M18 236.2H20M18 241.3H20M16 246.5H20M18 251.7H20M18 256.8H20M18 262H20M18 267.1H20M18 277.5H20M18 282.6H20M18 287.8H20M18 292.9H20M16 298.1H20M18 303.3H20M18 308.4H20M18 313.6H20M18 318.7H20M18 329.1H20M18 334.2H20M18 339.4H20M18 344.5H20M16 349.7H20M18 354.9H20M18 360H20M18 365.2H20M18 370.3H20M18 380.7H20M18 385.8H20M18 391H20M18 396.1H20M16 401.3H20M18 406.5H20M18 411.6H20M18 416.8H20M18 421.9H20M18 432.3H20M18 437.4H20M18 442.6H20M18 447.7H20M16 452.9H20M18 458.1H20M18 463.2H20M18 468.4H20M18 473.5H20M18 483.9H20" stroke="#b4b4b4" stroke-width="1" fill="none"/><path d="M14 14.3H20M14 65.9H20M14 117.5H20M14 169.1H20M14 220.7H20M14 272.3H20M14 323.9H20M14 375.5H20M14 427.1H20M14 478.7H20" stroke="#8c8c8c" stroke-width="1" fill="none"/><path d="M20.5 0V485" stroke="#9a9a9a" stroke-width="1"/></svg>
  <div class="rl" style="left:9px;top:13.5px;letter-spacing:.45px;transform:translate(-50%,-50%) rotate(-90deg)">240</div>
  <div class="rl" style="left:9px;top:65.1px;letter-spacing:.45px;transform:translate(-50%,-50%) rotate(-90deg)">230</div>
  <div class="rl" style="left:9px;top:116.7px;letter-spacing:.45px;transform:translate(-50%,-50%) rotate(-90deg)">220</div>
  <div class="rl" style="left:9px;top:168.3px;letter-spacing:.45px;transform:translate(-50%,-50%) rotate(-90deg)">210</div>
  <div class="rl" style="left:9px;top:219.9px;letter-spacing:.45px;transform:translate(-50%,-50%) rotate(-90deg)">200</div>
  <div class="rl" style="left:9px;top:271.5px;letter-spacing:.45px;transform:translate(-50%,-50%) rotate(-90deg)">190</div>
  <div class="rl" style="left:9px;top:323.1px;letter-spacing:.45px;transform:translate(-50%,-50%) rotate(-90deg)">180</div>
  <div class="rl" style="left:9px;top:374.7px;letter-spacing:.45px;transform:translate(-50%,-50%) rotate(-90deg)">170</div>
  <div class="rl" style="left:9px;top:426.3px;letter-spacing:.45px;transform:translate(-50%,-50%) rotate(-90deg)">160</div>
  <div class="rl" style="left:9px;top:477.9px;letter-spacing:.45px;transform:translate(-50%,-50%) rotate(-90deg)">150</div>
</div>
<!-- DRAWING WINDOW -->
<div id="canvas" class="abs">
  <div style="left:5px;top:0;width:1px;height:485px;background:#a8a8a8"></div>
  <svg style="left:0;top:0" width="871" height="485" viewBox="57 175 871 485">
    <path id="leaf" d="M449 215 C411.8 226.6 329.3 290.9 302.7 331.6 C257.5 382.7 287.3 438.9 299.8 458.7 C309.8 472.4 353.4 471.1 389 448.5 C416.9 431 423.3 408.1 433.2 376 C447.3 341.7 472.7 215.2 449 215 Z" fill="#f4b0b0" stroke="#573f3f" stroke-width="1.4"/>
    <g fill="#fff" stroke="#333" stroke-width=".9"><rect x="447.2" y="213.6" width="3" height="3"/><rect x="301.2" y="330" width="3" height="3"/><rect x="387.3" y="447" width="3" height="3"/><rect x="431.6" y="374.5" width="3" height="3"/></g><rect x="297.7" y="456.6" width="4.4" height="4.4" fill="#fff" stroke="#3a3a3a" stroke-width="1.2"/><rect x="299.2" y="458.2" width="1.4" height="1.4" fill="#666"/>
    <g fill="#000"><rect x="268.5" y="206" width="6" height="6"/><rect x="364.5" y="206" width="6" height="6"/><rect x="460.5" y="206" width="6" height="6"/><rect x="268.5" y="338" width="6" height="6"/><rect x="460.5" y="338" width="6" height="6"/><rect x="268.5" y="470" width="6" height="6"/><rect x="364.5" y="470" width="6" height="6"/><rect x="460.5" y="470" width="6" height="6"/></g>
    <path d="M365 339.2 L371 344.6 M371 339.2 L365 344.6" stroke="#123c30" stroke-width="1.9"/>
  </svg>
  <!-- vertical scrollbar -->
  <div style="left:871px;top:1px;width:19px;height:17px;background:#f0f0f0"></div>
  <svg style="left:876px;top:6px" width="10" height="6" viewBox="0 0 10 6"><path d="M0.8 5.2 L5 1 L9.2 5.2" fill="none" stroke="#333" stroke-width="1.6"/></svg>
  <div style="left:871.3px;top:187.5px;width:17px;height:78.3px;background:#cdcdcd"></div>
</div>
<!-- CURVE TOOLS FLYOUT -->
<div id="fly" class="abs">
  <div class="ic"></div>
  <div style="left:0;top:47px;width:192px;height:24px;background:#dbeaf9;border:1px solid #9fc6ea"></div>
  <div style="left:0;top:47px;width:21px;height:24px;background:#8ecbfa"></div>
  <div style="left:21px;top:48px;width:6px;height:22px;background:#e4ecf6"></div>
  <div style="left:29px;top:192px;width:162px;height:1px;background:#dcdcdc"></div>
  <svg style="left:4px;top:4.8px" width="15" height="16" viewBox="0 0 15 16"><path d="M3.4 0.5 V6.5 M0.4 3.5 H6.4" stroke="#4a6390" stroke-width="1.1"/><path d="M3.8 9.2 C5 7.6 6 8.4 6.6 10.2 C7.2 12 8.2 12.4 9 10.8 C9.8 9.2 10.8 9.6 11.4 11 C12 12.4 13 12.4 13.8 11.6" fill="none" stroke="#2e3340" stroke-width="1.3"/></svg>
  <div class="t" style="top:2.3px">手绘<i>(<u>F</u>)</i></div>
  <div class="k" style="right:17.5px;top:2.3px"><span style="position:static;letter-spacing:-1.1px">F5</span></div>
  <svg style="left:4px;top:28.2px" width="15" height="16" viewBox="0 0 15 16"><path d="M3.2 11.5 L12.2 2.5" stroke="#555" stroke-width="1.1"/><rect x="1.2" y="10" width="3" height="3" fill="#fff" stroke="#444" stroke-width=".9"/><rect x="10.7" y="1" width="3" height="3" fill="#fff" stroke="#444" stroke-width=".9"/></svg>
  <div class="t" style="top:25.7px">2 点线</div>
  <svg style="left:4px;top:51.5px" width="15" height="16" viewBox="0 0 15 16"><path d="M2.4 3 L12.2 12.8" stroke="#3d5a8a" stroke-width="1"/><rect x="5.6" y="6.2" width="3" height="3" fill="#fff" stroke="#2c3f66" stroke-width=".9"/><circle cx="2.4" cy="3" r="1.1" fill="#2c3f66"/><circle cx="12.2" cy="12.8" r="1.1" fill="#2c3f66"/></svg>
  <div class="t" style="top:49px">贝塞尔<i>(<u>B</u>)</i></div>
  <svg style="left:4px;top:76px" width="15" height="16" viewBox="0 0 15 16"><path d="M2.2 6.2 C2 3.6 5 3.2 6.2 6 C7.4 9 10 10.6 12 9.4 C13.6 8.4 13.2 5.8 11.6 5.8 C10.2 5.8 10 7.6 11.2 8.2" fill="none" stroke="#33343c" stroke-width="1.8" stroke-linecap="round"/></svg>
  <div class="t" style="top:73.5px">艺术笔</div>
  <div class="k" style="right:17.5px;top:73.5px">I</div>
  <svg style="left:4px;top:99.8px" width="15" height="16" viewBox="0 0 15 16"><path d="M7 0.5 C4.5 3.5 3.5 6.5 4.5 10.5 H9.5 C10.5 6.5 9.5 3.5 7 0.5 Z" fill="#fff" stroke="#333" stroke-width="1.1"/><path d="M7 2 V7" stroke="#333" stroke-width="1"/><circle cx="7" cy="7.6" r="1" fill="#333"/><rect x="3.5" y="11" width="7" height="3" fill="#333"/></svg>
  <div class="t" style="top:97.3px">钢笔<i>(<u>P</u>)</i></div>
  <svg style="left:4px;top:123.3px" width="15" height="16" viewBox="0 0 15 16"><path d="M1.5 9 C3 9 3.5 1 5.5 1.5 C7.5 2 6.5 13 8.5 13 C10 13 10 7 12 7" fill="none" stroke="#555" stroke-width="1.1"/><rect x="0.3" y="7.8" width="2.4" height="2.4" fill="#fff" stroke="#555" stroke-width=".8"/><circle cx="12.5" cy="7" r="1.3" fill="#fff" stroke="#555" stroke-width=".8"/></svg>
  <div class="t" style="top:120.8px">B 样条</div>
  <svg style="left:4px;top:146.8px" width="15" height="16" viewBox="0 0 15 16"><path d="M7 0.5 L4.2 10.5 H9.8 Z" fill="#f0f0f6" stroke="#444" stroke-width="1"/><path d="M5.2 7 H8.8" stroke="#444" stroke-width="1"/><rect x="3" y="11" width="8" height="3" fill="#3a3a55"/></svg>
  <div class="t" style="top:144.3px">折线<i>(<u>P</u>)</i></div>
  <svg style="left:4px;top:170.7px" width="15" height="16" viewBox="0 0 15 16"><path d="M2 11.5 C3 4 10 3 12.5 11.5" fill="none" stroke="#555" stroke-width="1"/><path d="M2 11.5 H12.5" stroke="#555" stroke-width="1"/><rect x="0.5" y="10" width="3" height="3" fill="#fff" stroke="#444" stroke-width=".9"/><rect x="11" y="10" width="3" height="3" fill="#fff" stroke="#444" stroke-width=".9"/><rect x="5.5" y="3.5" width="3" height="3" fill="#fff" stroke="#444" stroke-width=".9"/></svg>
  <div class="t" style="top:168.2px">3 点曲线<i>(<u>3</u>)</i></div>
  <svg style="left:4px;top:200.8px" width="15" height="16" viewBox="0 0 15 16"><path d="M7.4 1.2 L0.8 12.5 H14 Z" fill="none" stroke="#667090" stroke-width="1.2"/><path d="M7.4 0 V14.4" stroke="#e09440" stroke-width="1.1"/></svg>
  <div class="t" style="top:198.3px">智能绘图<i>(<u>S</u>)</i></div>
  <div class="k" style="right:17.5px;top:198.3px">Shift+S</div>
</div>
<!-- DOCKER TABS -->
<div class="abs" style="left:949px;top:132px;width:1px;height:528px;background:#dadada"></div>
<div id="dock" class="abs">
  <div style="left:0;top:21px;width:22px;height:271.5px;background:#dcdcdc"></div>
  <div style="left:0;top:124.5px;width:22px;height:91.5px;background:#cfe2fb"></div>
  <svg style="left:6px;top:5px" width="10" height="10" viewBox="0 0 10 10"><path d="M0.5 0.5 L9.5 9.5 M9.5 0.5 L0.5 9.5" stroke="#a8a8a8" stroke-width="1.3"/></svg>
  <svg style="left:1px;top:24px" width="20" height="18" viewBox="0 0 20 18"><path d="M5.5 0.8 L10.5 6 L5.5 11 L0.6 6 Z" fill="#f4f1ea" stroke="#8088a4" stroke-width="1"/><path d="M0.6 6 L3.6 3 L7.5 8.8 L5.5 11 Z" fill="#e9ab2c"/><path d="M5.2 0.2 L9 3.8" stroke="#7a7f98" stroke-width="1.1"/><g fill="#c4c2de" stroke="#8684b2" stroke-width="1.3"><rect x="7.2" y="5.2" width="5" height="5.6"/><rect x="13" y="5.2" width="5" height="5.6"/><rect x="7.2" y="11.6" width="5" height="5.6"/><rect x="13" y="11.6" width="5" height="5.6"/></g></svg>
  <div class="vt" style="top:46px">对象属性</div>
  <svg style="left:3px;top:129px" width="16" height="16" viewBox="0 0 16 16"><path d="M3.5 0 V16 M0 12 H16" stroke="#6f86b8" stroke-width="1" stroke-dasharray="1.3 1.3"/></svg>
  <div class="vt" style="top:151px">辅助线</div>
  <svg style="left:1px;top:221px" width="20" height="18" viewBox="0 0 20 18"><path d="M1 1 V13 L3.8 10.4 L6.4 16.2 L8.6 15.2 L6 9.6 L9.8 9.4 Z" fill="#fff" stroke="#6a6a6a" stroke-width="1" stroke-linejoin="round"/><text x="12" y="12" font-family="Liberation Sans,sans-serif" font-size="12.5" font-weight="bold" fill="#6e6e6e">?</text></svg>
  <div class="vt" style="top:242px">提示</div>
  <svg style="left:1px;top:312px" width="20" height="20" viewBox="0 0 20 20"><circle cx="10" cy="10" r="8.6" fill="none" stroke="#bdbdbd" stroke-width="1.3"/><path d="M10 5 V15 M5 10 H15" stroke="#c2c2c2" stroke-width="2"/></svg>
</div>
<!-- COLOUR PALETTE -->
<div id="pal" class="abs">
  <svg style="left:2px;top:3px" width="16" height="3" viewBox="0 0 16 3"><path d="M1 1.5 H16" stroke="#a0a0a0" stroke-width="1.5" stroke-dasharray="1.5 2.5"/></svg>
  <svg style="left:7px;top:12px" width="5" height="9" viewBox="0 0 5 9"><path d="M0 0 L5 4.5 L0 9 Z" fill="#111"/></svg>
  <svg style="left:2px;top:26px" width="15" height="14" viewBox="0 0 15 14"><path d="M1 13 L8 6" stroke="#c4c4c4" stroke-width="2.8"/><path d="M6.5 3.5 L11 8" stroke="#b4b4b4" stroke-width="2.2"/><path d="M8.8 4.2 L11.6 1.2 C12.8 0.2 14.4 1.8 13.4 3 L10.6 6 Z" fill="#b4b4b4"/></svg>
  <svg style="left:5px;top:48px" width="10" height="6" viewBox="0 0 10 6"><path d="M0.8 5.2 L5 1 L9.2 5.2" fill="none" stroke="#c4c4c4" stroke-width="1.4"/></svg>
  <div class="sw" style="top:61.3px;background:#fff;border-color:#444"></div>
  <svg style="left:0;top:61.3px" width="20" height="20" viewBox="0 0 20 20"><path d="M1 1 L19 19 M19 1 L1 19" stroke="#444" stroke-width=".9"/></svg>
  <div class="sw" style="top:80.4px;background:#231815"></div>
  <div class="sw" style="top:99.5px;background:#3e3a39"></div>
  <div class="sw" style="top:118.6px;background:#595757"></div>
  <div class="sw" style="top:137.7px;background:#727171"></div>
  <div class="sw" style="top:156.8px;background:#898989"></div>
  <div class="sw" style="top:175.9px;background:#9fa0a0"></div>
  <div class="sw" style="top:195px;background:#b5b5b6"></div>
  <div class="sw" style="top:214.1px;background:#c9caca"></div>
  <div class="sw" style="top:233.2px;background:#dcdddd"></div>
  <div class="sw" style="top:252.3px;background:#efefef"></div>
  <div class="sw" style="top:271.4px;background:#ffffff"></div>
  <div class="sw" style="top:290.5px;background:#1d2088"></div>
  <div class="sw" style="top:309.6px;background:#00a0e9"></div>
  <div class="sw" style="top:328.7px;background:#009944"></div>
  <div class="sw" style="top:347.8px;background:#fff100"></div>
  <div class="sw" style="top:366.9px;background:#e60012"></div>
  <div class="sw" style="top:386px;background:#e4007f"></div>
  <div class="sw" style="top:405.1px;background:#b03f8e"></div>
  <div class="sw" style="top:424.2px;background:#f08300"></div>
  <div style="left:0;top:443.3px;width:20px;height:20px;background:#fdfdfd"></div>
  <div style="left:1px;top:445.3px;width:18px;height:16px;background:#f5b2b2"></div>
  <div class="sw" style="top:462.4px;background:#897870"></div>
  <div class="sw" style="top:481.5px;background:#d2cde6"></div>
  <div class="sw" style="top:500.6px;background:#a59aca"></div>
  <div class="sw" style="top:519.7px;background:#6e8cc8"></div>
</div>
</body>
</html>
